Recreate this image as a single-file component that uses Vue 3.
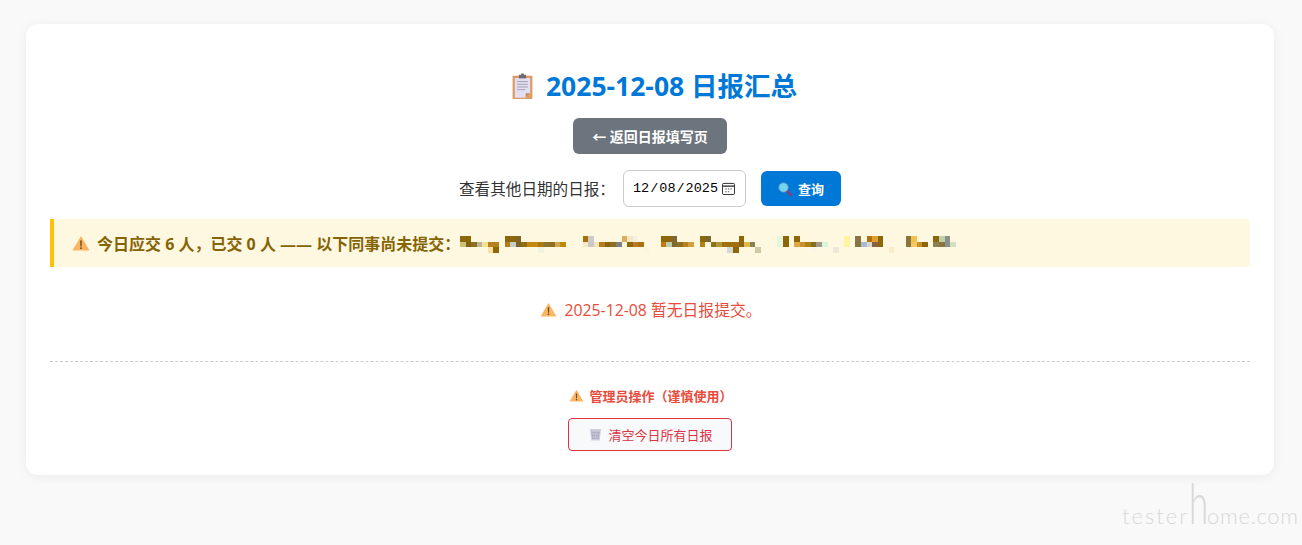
<script setup>
const dark = '#8c6608'
const mosaic = [
  [[0, dark], [1, dark], [8, dark], [9, dark], [10, '#7d6428'], [22, '#a8700c'], [23, '#cccccc'], [29, '#d9ad5c'], [30, '#f5e6c8'], [31, '#f3f2e5'], [36, dark], [37, dark], [38, '#80662e'], [43, dark], [44, '#7d6428'], [50, dark], [57, '#e6f5de'], [58, dark], [60, dark], [69, '#fff5a0'], [71, '#8a7540'], [73, '#b36f10'], [74, '#e0a030'], [75, dark], [80, '#8a7540'], [81, '#f0c050'], [85, dark], [86, '#c0d0a8'], [87, '#8a9090']],
  [[0, '#cfc078'], [1, '#7f6418'], [2, '#8f7020'], [3, '#bfb498'], [4, '#f0e090'], [5, '#b88020'], [6, '#b88018'], [8, '#b08018'], [9, '#c8ccc8'], [10, '#7d6428'], [11, '#8f6c18'], [12, '#c48a10'], [13, '#c48a10'], [14, '#a87a10'], [15, '#8a7430'], [16, '#8f7020'], [17, '#d0a850'], [18, '#c08808'], [22, '#f3e8cc'], [23, '#c8c8c0'], [24, '#f3e4c0'], [25, '#b87c20'], [26, dark], [27, '#8f7020'], [28, '#808080'], [30, dark], [31, '#b87c20'], [32, '#b07010'], [36, '#c07c08'], [37, '#bcccb0'], [38, '#806830'], [39, '#8f7020'], [40, '#b88020'], [41, '#d0a040'], [43, '#b08018'], [45, '#8f7020'], [46, '#b09830'], [47, '#a07010'], [48, '#a07010'], [49, '#a07010'], [50, dark], [51, '#e0b850'], [52, '#8a8050'], [57, '#e6f5de'], [58, dark], [60, '#e0a840'], [61, '#c89030'], [62, '#b08010'], [63, '#807020'], [64, '#a09888'], [65, '#d8f5e0'], [69, '#fff5a0'], [71, '#8a7540'], [72, '#a8bcd0'], [73, '#d8d8d0'], [74, '#8c6040'], [75, dark], [80, '#8a7540'], [81, '#f8c860'], [82, '#c89028'], [83, dark], [85, '#8a8050'], [86, '#8a7540'], [87, '#8a9090'], [88, '#d0e0c0']],
  [[5, '#fddfa0'], [6, dark], [14, '#f0f2e0'], [33, '#fbf5e0'], [48, '#d0d8d0'], [49, dark], [53, '#d0c8a8'], [63, '#fbf5e6'], [67, '#ece8d8'], [77, '#f8eccc']]
]
</script>

<template>
  <div class="page">
    <div class="card">
      <h1 class="title">
        <svg class="clip-icon" viewBox="0 0 24 30" width="23" height="27">
          <rect x="1" y="3" width="22" height="26" rx="1" fill="#dd9c66" />
          <path d="M3.500 5.500h17v17l-5 5h-12z" fill="#e4dff0" />
          <path d="M15.500 27.500v-5h5z" fill="#c98a52" />
          <rect x="8" y="2" width="8" height="4" fill="#6f6a72" />
          <rect x="10.500" y="0.500" width="3" height="2.500" fill="#6f6a72" />
          <path d="M6 9.500h12M6 12.500h12M6 15.500h12M6 18.500h9" stroke="#9c98ae" stroke-width="1" />
        </svg>
        <span class="title-text">2025-12-08 日报汇总</span>
      </h1>

      <a class="back-btn">← 返回日报填写页</a>

      <div class="date-row">
        <label class="date-label">查看其他日期的日报：</label>
        <input class="date-input" type="date" value="2025-12-08" />
        <button class="query-btn">
          <svg viewBox="0 0 14 14" width="14" height="14">
            <path d="M8.500 8.500L13 13" stroke="#8e3a6e" stroke-width="2.400" stroke-linecap="round" />
            <circle cx="5.500" cy="5.500" r="4.600" fill="#74d3ee" stroke="#7aa6c2" stroke-width="0.800" />
          </svg>
          <span>查询</span>
        </button>
      </div>

      <div class="notice">
        <svg class="warn" viewBox="0 0 18 16" width="18" height="16">
          <path d="M9 1L17.500 15.500H.5z" fill="#fbb560" />
          <path d="M8.200 5.500h1.600l-.2 6H8.400z" fill="#6b4a2a" />
          <rect x="8.200" y="12.300" width="1.600" height="1.700" fill="#6b4a2a" />
        </svg>
        <span class="notice-text">今日应交 6 人，已交 0 人 —— 以下同事尚未提交：</span>
        <svg class="mosaic" width="500" height="18" viewBox="0 0 500 18" shape-rendering="crispEdges">
          <template v-for="(row, r) in mosaic" :key="r">
            <rect
              v-for="cell in row"
              :key="cell[0]"
              :x="cell[0] * 5.57"
              :y="r * 5.67"
              width="5.6"
              height="5.7"
              :fill="cell[1]"
            />
          </template>
        </svg>
      </div>

      <p class="empty">
        <svg class="warn" viewBox="0 0 18 16" width="17" height="15">
          <path d="M9 1L17.500 15.500H.5z" fill="#fbb560" />
          <path d="M8.200 5.500h1.600l-.2 6H8.400z" fill="#6b4a2a" />
          <rect x="8.200" y="12.300" width="1.600" height="1.700" fill="#6b4a2a" />
        </svg>
        <span>2025-12-08 暂无日报提交。</span>
      </p>

      <div class="admin">
        <p class="admin-title">
          <svg class="warn" viewBox="0 0 18 16" width="15" height="13">
            <path d="M9 1L17.500 15.500H.5z" fill="#fbb560" />
            <path d="M8.200 5.500h1.600l-.2 6H8.400z" fill="#6b4a2a" />
            <rect x="8.200" y="12.300" width="1.600" height="1.700" fill="#6b4a2a" />
          </svg>
          <span>管理员操作（谨慎使用）</span>
        </p>
        <button class="clear-btn">
          <svg viewBox="0 0 14 14" width="13" height="13">
            <path d="M1 1h12l-1.500 12.500h-9z" fill="#d0cede" />
            <path d="M3 3l1 9M5.500 3l.3 9M8.500 3l-.3 9M11 3l-1 9M2.500 5h9M3 8h8M3.300 11h7.400" stroke="#a09eb4" stroke-width="0.600" fill="none" />
          </svg>
          <span>清空今日所有日报</span>
        </button>
      </div>
    </div>

    <div class="watermark"><span class="tester">tester</span><span class="big">h</span>ome.com</div>
  </div>
</template>

<style>
html, body {
  margin: 0;
  background: #f9f9f9;
}
</style>

<style scoped>
.page {
  position: relative;
  height: 545px;
  overflow: hidden;
  padding: 24px 28px 0 26px;
  box-sizing: border-box;
  font-family: "Open Sans", "Noto Sans CJK SC", sans-serif;
}

.card {
  display: flex;
  flex-direction: column;
  align-items: center;
  height: 451px;
  box-sizing: border-box;
  padding: 44px 24px 24px;
  background: #fff;
  border-radius: 12px;
  box-shadow: 0 2px 12px rgba(0, 0, 0, 0.06);
}

.title {
  display: flex;
  align-items: center;
  gap: 12px;
  height: 36px;
  margin: 0 0 14px 8px;
  font-size: 26.500px;
  font-weight: 700;
  color: #0078d7;
}

.title-text {
  margin-top: -4px;
}

.back-btn {
  display: flex;
  align-items: center;
  justify-content: center;
  width: 154px;
  height: 36px;
  border-radius: 6px;
  background: #6c757d;
  color: #fff;
  font-size: 14px;
  font-weight: 700;
}

.date-row {
  display: flex;
  align-items: center;
  height: 37px;
  margin-top: 16px;
}

.date-label {
  font-size: 15.600px;
  color: #333;
  margin-right: 8px;
}

.date-input {
  width: 123px;
  height: 37px;
  box-sizing: border-box;
  padding: 0 10px 0 8px;
  border: 1px solid #ccc;
  border-radius: 6px;
  background: #fff;
  font-family: "Liberation Mono", monospace;
  font-size: 13.500px;
  color: #000;
}

.date-input::-webkit-calendar-picker-indicator {
  width: 13px;
  height: 13px;
  margin: 0;
  padding: 0;
  background: url("data:image/svg+xml,%3Csvg xmlns='http://www.w3.org/2000/svg' viewBox='0 0 14 14'%3E%3Crect x='.5' y='1.500' width='13' height='12' rx='1.500' fill='none' stroke='%23222'/%3E%3Cpath d='M1 4.500h12' stroke='%23222' stroke-width='1.400'/%3E%3Cpath d='M3.500 7.500h1.500M6.300 7.500h1.500M9 7.500h1.500M3.500 10.500h1.500M6.300 10.500h1.500' stroke='%23444'/%3E%3C/svg%3E") no-repeat center / 13px 13px;
}

.query-btn {
  display: flex;
  align-items: center;
  justify-content: center;
  gap: 6px;
  width: 80px;
  height: 35px;
  margin-left: 15px;
  border: 0;
  border-radius: 6px;
  background: #0078d7;
  color: #fff;
  font-family: inherit;
  font-size: 13px;
  font-weight: 700;
}

.notice {
  display: flex;
  align-items: center;
  align-self: stretch;
  height: 48px;
  margin-top: 12px;
  padding-left: 18px;
  border-left: 4px solid #ffc107;
  border-radius: 0 4px 4px 0;
  background: #fff8e1;
  color: #856404;
  font-size: 16px;
  font-weight: 700;
}

.notice .warn {
  margin-right: 7px;
}

.notice-text {
  width: 363px;
  flex: none;
  white-space: nowrap;
}

.mosaic {
  flex: none;
  margin-top: 3px;
}

.empty {
  display: flex;
  align-items: center;
  gap: 7px;
  height: 24px;
  margin: 30px 0 0 2px;
  color: #e74c3c;
  font-size: 15.800px;
}

.admin {
  display: flex;
  flex-direction: column;
  align-items: center;
  align-self: stretch;
  margin-top: 40px;
  padding-top: 22px;
  border-top: 1px dashed #ccc;
}

.admin-title {
  display: flex;
  align-items: center;
  gap: 5px;
  height: 22px;
  margin: 0 0 12px 2px;
  color: #e74c3c;
  font-size: 13px;
  font-weight: 700;
}

.clear-btn {
  display: flex;
  align-items: center;
  justify-content: center;
  gap: 6px;
  width: 164px;
  height: 33px;
  box-sizing: border-box;
  padding: 0 0 0 2px;
  border: 1px solid #dc3545;
  border-radius: 4px;
  background: #f8f9fa;
  color: #dc3545;
  font-family: inherit;
  font-size: 13px;
}

.watermark {
  position: absolute;
  left: 1122px;
  top: 496px;
  height: 40px;
  line-height: 40px;
  white-space: nowrap;
  font-family: Lato, sans-serif;
  font-size: 22px;
  font-weight: 300;
  letter-spacing: 0.700px;
  color: #d8d8d8;
}

.tester {
  letter-spacing: 2px;
}

.big {
  display: inline-block;
  font-size: 58px;
  line-height: 0;
  width: 18px;
  letter-spacing: 0;
  transform: scaleX(0.6);
  transform-origin: 0 100%;
}
</style>
